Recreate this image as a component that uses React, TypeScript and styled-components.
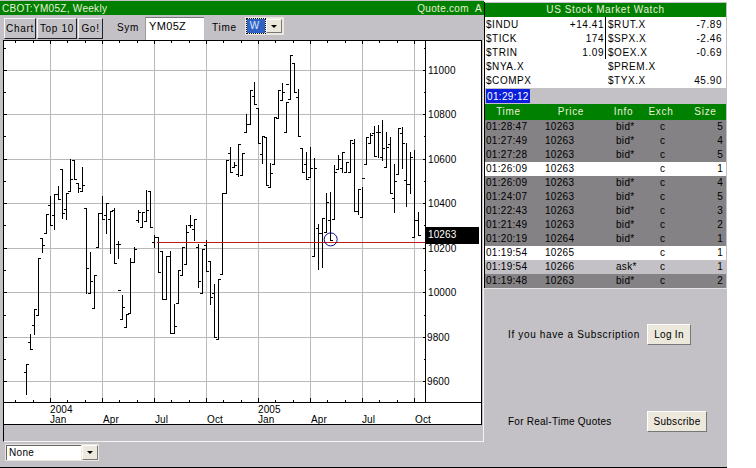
import React from 'react';
import styled, { createGlobalStyle } from 'styled-components';

const gray = '#c3c1c5';
const green = '#008000';
const font = `'Liberation Sans', Arial, sans-serif`;

type Bar = [number, number, number, number, number];

// x, high, low, open tick, close tick (page pixels)
const bars: Bar[] = [
    [26, 364, 394, 372, 364], [30, 334, 349, 342, 349], [34, 309, 334, 325, 309], [38, 258, 315, 315, 258],
    [42, 238, 252, 238, 245], [46, 214, 233, 233, 214], [50, 196, 225, 205, 225], [54, 194, 229, 215, 194],
    [58, 186, 199, 194, 199], [62, 169, 218, 169, 213], [66, 193, 219, 209, 193], [70, 159, 191, 191, 179],
    [74, 160, 179, 160, 179], [78, 183, 192, 183, 188], [82, 167, 191, 191, 185], [86, 208, 293, 208, 268],
    [90, 252, 293, 293, 281], [94, 275, 308, 308, 275], [98, 213, 247, 247, 213], [102, 196, 219, 213, 219],
    [106, 203, 233, 215, 203], [110, 211, 253, 219, 211], [114, 208, 263, 210, 263], [118, 241, 258, 244, 244],
    [122, 295, 319, 319, 307], [126, 314, 327, 327, 314], [130, 258, 313, 313, 262], [134, 247, 262, 262, 249],
    [138, 210, 222, 220, 212], [142, 212, 227, 227, 212], [146, 190, 221, 221, 210], [150, 191, 227, 191, 227],
    [154, 235, 247, 242, 237], [158, 237, 272, 237, 272], [162, 251, 299, 251, 299], [166, 256, 299, 299, 256],
    [170, 251, 333, 256, 333], [174, 304, 333, 333, 326], [178, 270, 303, 303, 270], [182, 247, 275, 275, 247],
    [186, 225, 264, 264, 232], [190, 215, 227, 225, 225], [194, 219, 240, 229, 219], [198, 244, 287, 247, 281],
    [202, 249, 293, 293, 249], [206, 240, 271, 245, 271], [210, 261, 304, 261, 297], [214, 284, 337, 293, 337],
    [218, 279, 339, 339, 279], [222, 193, 274, 274, 193], [226, 160, 193, 193, 160], [230, 147, 172, 153, 172],
    [234, 162, 167, 167, 165], [238, 144, 176, 174, 144], [242, 153, 175, 175, 153], [246, 114, 132, 132, 124],
    [250, 90, 124, 124, 90], [254, 82, 104, 96, 104], [258, 108, 143, 108, 143], [262, 136, 163, 154, 136],
    [266, 137, 185, 137, 185], [270, 163, 187, 187, 173], [274, 117, 164, 164, 117], [278, 90, 118, 118, 90],
    [282, 83, 100, 100, 92], [286, 102, 132, 132, 102], [290, 55, 99, 99, 55], [294, 63, 92, 63, 92],
    [298, 89, 136, 97, 136], [302, 148, 172, 148, 172], [306, 152, 179, 164, 179], [310, 147, 177, 177, 168],
    [314, 158, 256, 256, 168], [318, 224, 269, 228, 233], [322, 218, 267, 233, 218], [326, 193, 232, 232, 202],
    [330, 192, 240, 220, 240], [334, 165, 219, 219, 172], [338, 155, 169, 169, 159], [342, 152, 172, 168, 152],
    [346, 162, 172, 172, 162], [350, 140, 172, 172, 140], [354, 139, 211, 143, 211], [358, 189, 214, 211, 189],
    [362, 187, 217, 217, 178], [366, 137, 164, 164, 137], [370, 133, 143, 143, 135], [374, 126, 156, 133, 156],
    [378, 125, 157, 132, 132], [382, 120, 160, 157, 148], [386, 132, 167, 167, 147], [390, 137, 193, 144, 193],
    [394, 164, 212, 198, 181], [398, 128, 174, 174, 128], [402, 127, 168, 133, 143], [406, 143, 206, 180, 184],
    [410, 152, 193, 184, 157], [414, 150, 237, 237, 220], [418, 212, 235, 220, 235],
];

const gridX = [50, 102, 154, 206, 258, 310, 362, 414];
const gridY = [70, 114, 159, 203, 248, 292, 337, 381];
const monthX = [15, 33, 67, 85, 119, 137, 171, 189, 223, 241, 275, 293, 327, 345, 379, 397];
const minorY = [48, 92, 136, 181, 225, 270, 315, 359];

const priceLabels: [number, string][] = [
    [70, '11000'], [114, '10800'], [159, '10600'], [203, '10400'], [248, '10200'], [292, '10000'],
];
const smallPriceLabels: [number, string][] = [[337, '9800'], [381, '9600']];
const dateLabels: [number, string][] = [[50, 'Jan'], [103, 'Apr'], [155, 'Jul'], [207, 'Oct'], [258, 'Jan'], [311, 'Apr'], [362, 'Jul'], [415, 'Oct']];

const quotes: [string, string, string, string][] = [
    ['$INDU', '+14.41', '$RUT.X', '-7.89'],
    ['$TICK', '174', '$SPX.X', '-2.46'],
    ['$TRIN', '1.09', '$OEX.X', '-0.69'],
    ['$NYA.X', '', '$PREM.X', ''],
    ['$COMPX', '', '$TYX.X', '45.90'],
];

type Tone = 'bid' | 'flat' | 'ask';

const trades: { time: string; price: string; info: string; size: string; tone: Tone }[] = [
    { time: '01:28:47', price: '10263', info: 'bid*', size: '5', tone: 'bid' },
    { time: '01:27:49', price: '10263', info: 'bid*', size: '4', tone: 'bid' },
    { time: '01:27:28', price: '10263', info: 'bid*', size: '5', tone: 'bid' },
    { time: '01:26:09', price: '10263', info: '', size: '1', tone: 'flat' },
    { time: '01:26:09', price: '10263', info: 'bid*', size: '4', tone: 'bid' },
    { time: '01:24:07', price: '10263', info: 'bid*', size: '5', tone: 'bid' },
    { time: '01:22:43', price: '10263', info: 'bid*', size: '3', tone: 'bid' },
    { time: '01:21:49', price: '10263', info: 'bid*', size: '2', tone: 'bid' },
    { time: '01:20:19', price: '10264', info: 'bid*', size: '1', tone: 'bid' },
    { time: '01:19:54', price: '10265', info: '', size: '1', tone: 'flat' },
    { time: '01:19:54', price: '10266', info: 'ask*', size: '1', tone: 'ask' },
    { time: '01:19:48', price: '10263', info: 'bid*', size: '2', tone: 'bid' },
];

const barPath = bars
    .map(([x, hi, lo, open, close]) => `M${x + 0.5} ${hi}V${lo + 1}M${x - 2} ${open + 0.5}H${x}M${x + 1} ${close + 0.5}H${x + 3}`)
    .join('');

const PriceChart = () => (
    <ChartSvg viewBox="4 41 477 383" width={477} height={383}>
        <g stroke="#b9b9b9" shapeRendering="crispEdges">
            {gridX.map(x => <line key={x} x1={x + 0.5} x2={x + 0.5} y1={41} y2={402} />)}
            {gridY.map(y => <line key={y} x1={4} x2={425} y1={y + 0.5} y2={y + 0.5} />)}
        </g>
        <g stroke="#000" shapeRendering="crispEdges">
            {gridX.map(x => <line key={x} x1={x + 0.5} x2={x + 0.5} y1={41} y2={44} />)}
            {gridX.map(x => <line key={x} x1={x + 0.5} x2={x + 0.5} y1={398} y2={402} />)}
            {monthX.map(x => <line key={x} x1={x + 0.5} x2={x + 0.5} y1={41} y2={43} />)}
            {monthX.map(x => <line key={x} x1={x + 0.5} x2={x + 0.5} y1={400} y2={402} />)}
            {gridY.map(y => <line key={y} x1={4} x2={7} y1={y + 0.5} y2={y + 0.5} />)}
            {minorY.map(y => <line key={y} x1={4} x2={6} y1={y + 0.5} y2={y + 0.5} />)}
            {gridY.map(y => <line key={y} x1={423} x2={425} y1={y + 0.5} y2={y + 0.5} />)}
            {minorY.map(y => <line key={y} x1={424} x2={426} y1={y + 0.5} y2={y + 0.5} />)}
            <line x1={425.5} x2={425.5} y1={41} y2={403} />
            <line x1={4} x2={481} y1={402.5} y2={402.5} />
            <path d={`${barPath}M286 84.5H289M118 290.5H121M362 178.5H365`} fill="none" />
        </g>
        <line x1={157} x2={430} y1={242.5} y2={242.5} stroke="#bf1c1c" shapeRendering="crispEdges" />
        <circle cx={330.7} cy={239.4} r={6.5} fill="none" stroke="#10108a" />
        <rect x={425} y={227} width={54} height={17} fill="#000" />
        <AxisText x={428} y={238} fill="#fff">10263</AxisText>
        {priceLabels.map(([y, label]) => <AxisText key={label} x={428} y={y + 4}>{label}</AxisText>)}
        {smallPriceLabels.map(([y, label]) => <AxisText key={label} x={427} y={y + 4}>{label}</AxisText>)}
        <AxisText x={50} y={413}>2004</AxisText>
        <AxisText x={258} y={413}>2005</AxisText>
        {dateLabels.map(([x, label]) => <AxisText key={x} x={x} y={423}>{label}</AxisText>)}
    </ChartSvg>
);

const App = () => (
    <Page>
        <GlobalStyle />
        <LeftPanel>
            <TitleBar>
                <span>CBOT:YM05Z, Weekly</span>
                <span>Quote.com&nbsp;&nbsp;A</span>
            </TitleBar>
            <Toolbar>
                <ToolButton $width={32}>Chart</ToolButton>
                <ToolButton $width={40}>Top 10</ToolButton>
                <ToolButton $width={25}>Go!</ToolButton>
                <SymLabel>Sym</SymLabel>
                <SymInput>YM05Z</SymInput>
                <TimeLabel>Time</TimeLabel>
                <TimeSelect>
                    <Highlight>W</Highlight>
                    <DropButton><Arrow /></DropButton>
                </TimeSelect>
            </Toolbar>
            <ChartWell>
                <ChartBox>
                    <PriceChart />
                </ChartBox>
            </ChartWell>
            <BottomBar>
                <StudySelect>
                    <StudyValue>None</StudyValue>
                    <DropButton><Arrow /></DropButton>
                </StudySelect>
            </BottomBar>
        </LeftPanel>
        <RightPanel>
            <WatchSection>
                <GreenHead>US Stock Market Watch</GreenHead>
                <QuoteGrid>
                    {quotes.map(([symA, valA, symB, valB], i) => (
                        <QuoteRow key={symA}>
                            <span>{symA}</span>
                            <QuoteValue $divided={i < 3}>{valA}</QuoteValue>
                            <QuoteSymbol>{symB}</QuoteSymbol>
                            <QuoteValue>{valB}</QuoteValue>
                        </QuoteRow>
                    ))}
                </QuoteGrid>
                <ClockBar><Clock>01:29:12</Clock></ClockBar>
                <TableHead>
                    <span>Time</span>
                    <span>Price</span>
                    <span>Info</span>
                    <span>Exch</span>
                    <span>Size</span>
                </TableHead>
                {trades.map(t => (
                    <TradeRow key={t.time + t.price + t.size + t.info} $tone={t.tone}>
                        <span>{t.time}</span>
                        <span>{t.price}</span>
                        <span>{t.info}</span>
                        <span>c</span>
                        <SizeCell>{t.size}</SizeCell>
                    </TradeRow>
                ))}
            </WatchSection>
            <Promo>
                <PromoRow>
                    <PromoText $spacing={0.65}>If you have a Subscription</PromoText>
                    <PromoButton $width={44}>Log In</PromoButton>
                </PromoRow>
                <PromoRow>
                    <PromoText $spacing={0.25}>For Real-Time Quotes</PromoText>
                    <PromoButton $width={60}>Subscribe</PromoButton>
                </PromoRow>
            </Promo>
        </RightPanel>
    </Page>
);

export default App;

const GlobalStyle = createGlobalStyle`
    html, body {
        margin: 0;
        background: #fff;
    }
    * {
        box-sizing: border-box;
    }
`;

const Page = styled.div`
    display: flex;
    width: 727px;
    height: 468px;
    border-bottom: 1px solid #000;
    font-family: ${font};
    font-size: 10px;
    letter-spacing: 0.3px;
    color: #000;
    overflow: hidden;
`;

const LeftPanel = styled.div`
    display: flex;
    flex-direction: column;
    width: 484px;
    background: ${gray};
`;

const TitleBar = styled.div`
    display: flex;
    justify-content: space-between;
    align-items: center;
    height: 14px;
    margin-top: 1px;
    padding: 0 2px 0 2px;
    background: ${green};
    color: #e8f0d8;
    font-size: 10px;
    letter-spacing: 0.3px;
`;

const Toolbar = styled.div`
    display: flex;
    align-items: flex-start;
    height: 25px;
    padding: 2px 0 0 4px;
`;

const ToolButton = styled.div<{ $width: number }>`
    display: flex;
    align-items: center;
    justify-content: center;
    width: ${p => p.$width}px;
    height: 21px;
    margin-top: 1px;
    margin-right: 1px;
    border: 1px solid;
    border-color: #f4f4f4 #222 #222 #f4f4f4;
    background: ${gray};
    letter-spacing: 0.7px;
`;

const SymLabel = styled.span`
    margin: 5px 0 0 13px;
    letter-spacing: 0.7px;
`;

const SymInput = styled.div`
    width: 59px;
    height: 23px;
    margin-left: 6px;
    padding: 2px 0 0 3px;
    background: #fff;
    border-top: 1px solid #777;
    border-left: 1px solid #999;
    font-size: 11px;
`;

const TimeLabel = styled.span`
    margin: 5px 0 0 8px;
    letter-spacing: 0.7px;
`;

const TimeSelect = styled.div`
    display: flex;
    width: 39px;
    height: 18px;
    margin-left: 8px;
    padding: 2px;
    background: #ece8e0;
`;

const Highlight = styled.span`
    flex: 1;
    padding-left: 3px;
    background: #2f62c4;
    color: #dfe8ff;
    outline: 1px dotted #111;
    font-size: 10px;
    line-height: 14px;
`;

const DropButton = styled.span`
    display: flex;
    align-items: center;
    justify-content: center;
    width: 16px;
    margin-left: 1px;
    border: 1px solid;
    border-color: #fff #777 #777 #fff;
    background: #ece8dc;
`;

const Arrow = styled.span`
    width: 0;
    height: 0;
    border-left: 3px solid transparent;
    border-right: 3px solid transparent;
    border-top: 3px solid #000;
`;

const ChartWell = styled.div`
    height: 402px;
    margin-left: 3px;
    border-left: 1px solid #000;
    border-right: 1px solid #f4f4f4;
    border-bottom: 1px solid #f4f4f4;
    padding-right: 1px;
`;

const ChartBox = styled.div`
    width: 478px;
    height: 385px;
    background: #fff;
    border-top: 1px solid #000;
    border-right: 1px solid #000;
    border-bottom: 1px solid #000;
`;

const ChartSvg = styled.svg`
    display: block;
`;

const AxisText = styled.text`
    font-family: ${font};
    font-size: 10px;
    letter-spacing: 0.1px;
`;

const BottomBar = styled.div`
    flex: 1;
    padding: 2px 0 0 5px;
`;

const StudySelect = styled.div`
    display: flex;
    width: 94px;
    height: 17px;
    padding: 1px;
    background: #ece8e0;
`;

const StudyValue = styled.span`
    flex: 1;
    padding-left: 2px;
    background: #fff;
    border-top: 1px solid #666;
    border-left: 1px solid #666;
    line-height: 14px;
    letter-spacing: 0.3px;
`;

const RightPanel = styled.div`
    display: flex;
    flex-direction: column;
    width: 243px;
    margin-top: 2px;
    background: ${gray};
`;

const WatchSection = styled.div`
    padding: 1px 1px 0 0;
    border-left: 1px solid #000;
`;

const GreenHead = styled.div`
    height: 14px;
    background: ${green};
    color: #e8f0d8;
    text-align: center;
    line-height: 14px;
    letter-spacing: 0.6px;
`;

const QuoteGrid = styled.div`
    padding-bottom: 1px;
    background: #fff;
`;

const QuoteRow = styled.div`
    display: grid;
    grid-template-columns: 60px 60px 58px 1fr;
    height: 14px;
    line-height: 16px;
    padding: 0 3px 0 1px;
    letter-spacing: 0.55px;
`;

const QuoteSymbol = styled.span`
    padding-left: 2px;
`;

const QuoteValue = styled.span<{ $divided?: boolean }>`
    height: 14px;
    text-align: right;
    padding-right: 1px;
    border-right: ${p => (p.$divided ? '1px solid #000' : '1px solid transparent')};
    &:last-child {
        border-right: 0;
    }
`;

const ClockBar = styled.div`
    height: 16px;
    padding: 1px 0 1px 1px;
`;

const Clock = styled.span`
    display: block;
    width: 44px;
    height: 14px;
    background: #0a1edc;
    color: #fff;
    line-height: 15px;
    padding-left: 1px;
    letter-spacing: 0.35px;
`;

const TableHead = styled.div`
    display: grid;
    grid-template-columns: 47px 78px 27px 48px 1fr;
    height: 16px;
    background: ${green};
    color: #e8f0d8;
    text-align: center;
    line-height: 16px;
    letter-spacing: 0.7px;
`;

const toneColor: Record<Tone, string> = {
    bid: '#848284',
    flat: '#ffffff',
    ask: '#c3c1c5',
};

const TradeRow = styled.div<{ $tone: Tone }>`
    display: grid;
    grid-template-columns: 59px 71px 44px 30px 1fr;
    height: 14px;
    line-height: 14px;
    padding: 0 3px 0 1px;
    background: ${p => toneColor[p.$tone]};
`;

const SizeCell = styled.span`
    text-align: right;
`;

const Promo = styled.div`
    display: flex;
    flex-direction: column;
    gap: 66px;
    padding: 35px 0 0 24px;
    border-top: 1px solid #e4e4e4;
`;

const PromoRow = styled.div`
    display: flex;
    align-items: center;
    height: 21px;
`;

const PromoText = styled.span<{ $spacing: number }>`
    width: 139px;
    letter-spacing: ${p => p.$spacing}px;
`;

const PromoButton = styled.div<{ $width: number }>`
    display: flex;
    align-items: center;
    justify-content: center;
    width: ${p => p.$width}px;
    height: 21px;
    border: 1px solid;
    border-color: #fff #777 #777 #fff;
    background: #ece8dc;
    letter-spacing: 0.3px;
`;
